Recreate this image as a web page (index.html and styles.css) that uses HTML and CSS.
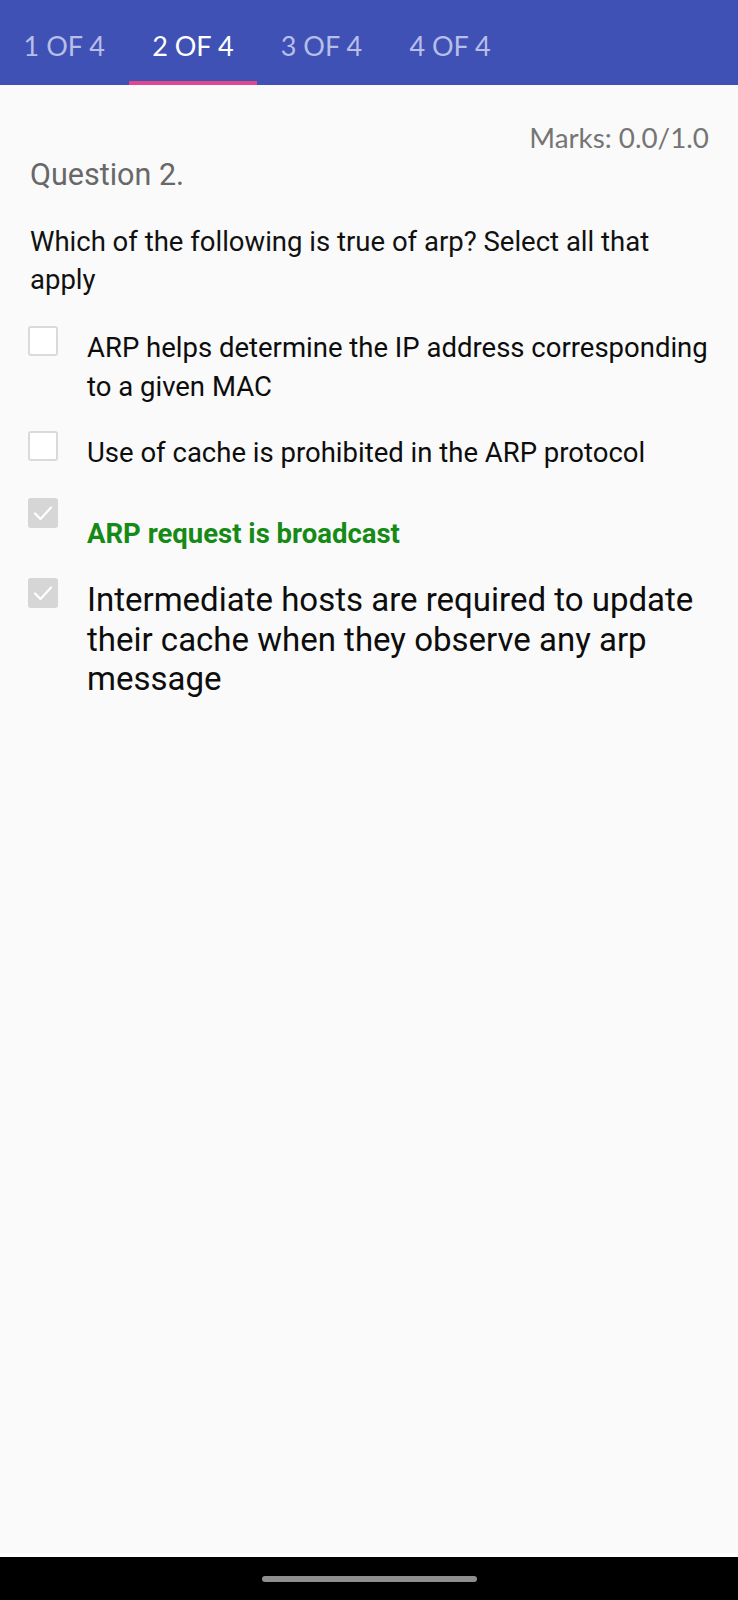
FILE: index.html
```html
<!DOCTYPE html>
<html>
<head>
<meta charset="utf-8">
<link rel="stylesheet" href="styles.css">
</head>
<body>
<div class="screen">
  <nav class="tabs">
    <div class="tab">1 OF 4</div>
    <div class="tab active">2 OF 4</div>
    <div class="tab">3 OF 4</div>
    <div class="tab">4 OF 4</div>
  </nav>
  <main class="content">
    <div class="marks">Marks: 0.0/1.0</div>
    <div class="qnum">Question 2.</div>
    <div class="qtext">Which of the following is true of arp? Select all that apply</div>
    <div class="options">
      <div class="opt">
        <span class="box"></span>
        <span class="otext">ARP helps determine the IP address corresponding to a given MAC</span>
      </div>
      <div class="opt">
        <span class="box"></span>
        <span class="otext">Use of cache is prohibited in the ARP protocol</span>
      </div>
      <div class="opt">
        <span class="box checked"><svg viewBox="0 0 30 30" width="30" height="30"><path d="M7 15.5 L12.5 21 L23 9.5" fill="none" stroke="#ffffff" stroke-width="2.2" stroke-linecap="round" stroke-linejoin="round"/></svg></span>
        <span class="otext correct">ARP request is broadcast</span>
      </div>
      <div class="opt">
        <span class="box checked"><svg viewBox="0 0 30 30" width="30" height="30"><path d="M7 15.5 L12.5 21 L23 9.5" fill="none" stroke="#ffffff" stroke-width="2.2" stroke-linecap="round" stroke-linejoin="round"/></svg></span>
        <span class="otext big">Intermediate hosts are required to update their cache when they observe any arp message</span>
      </div>
    </div>
  </main>
  <footer class="navbar">
    <span class="pill"></span>
  </footer>
</div>
</body>
</html>
```
FILE: styles.css
```css
html, body {
  margin: 0;
  padding: 0;
  background: #fafafa;
}
.screen {
  display: flex;
  flex-direction: column;
  min-height: 1600px;
  font-family: Roboto, "Liberation Sans", sans-serif;
}
.tabs {
  display: flex;
  height: 85px;
  background: #3f51b5;
}
.tab {
  width: 128.6px;
  box-sizing: border-box;
  padding-top: 29px;
  text-align: center;
  font-family: Lato, "Open Sans", sans-serif;
  font-weight: 400;
  font-size: 27px;
  line-height: 34px;
  color: #b7bee8;
  border-bottom: 4px solid transparent;
}
.tab.active {
  color: #ffffff;
  border-bottom-color: #e0468a;
}
.content {
  flex: 1;
  padding: 35px 29px 0 30px;
}
.marks {
  text-align: right;
  font-family: Lato, "Open Sans", sans-serif;
  font-weight: 400;
  font-size: 27.8px;
  line-height: 36px;
  color: #757575;
}
.qnum {
  margin-top: 1px;
  font-size: 30.5px;
  line-height: 36px;
  color: #686868;
}
.qtext {
  margin-top: 30px;
  max-width: 660px;
  font-size: 27.5px;
  line-height: 38px;
  color: #111111;
}
.options {
  margin-top: 27px;
  margin-left: -2px;
  display: flex;
  flex-direction: column;
  gap: 25px;
}
.opt {
  display: flex;
  align-items: flex-start;
  gap: 29px;
}
.box {
  flex: none;
  width: 30px;
  height: 30px;
  box-sizing: border-box;
  border: 2px solid #dadada;
  border-radius: 3px;
  background: #ffffff;
  display: flex;
  align-items: center;
  justify-content: center;
}
.box.checked {
  background: #d6d6d6;
  border-color: #d6d6d6;
}
.box svg {
  flex: none;
}
.otext {
  padding-top: 3px;
  font-size: 27.5px;
  line-height: 38.5px;
  color: #0d0d0d;
}
.otext.correct {
  padding-top: 17px;
  font-weight: bold;
  color: #168a16;
}
.otext.big {
  padding-top: 2px;
  font-size: 33px;
  line-height: 39.5px;
}
.navbar {
  height: 47px;
  box-sizing: border-box;
  background: #000000;
  border-top: 4px solid #ffffff;
  display: flex;
  justify-content: center;
  padding-top: 19px;
}
.pill {
  width: 215px;
  height: 6px;
  border-radius: 3px;
  background: #8e8e8e;
}
```
